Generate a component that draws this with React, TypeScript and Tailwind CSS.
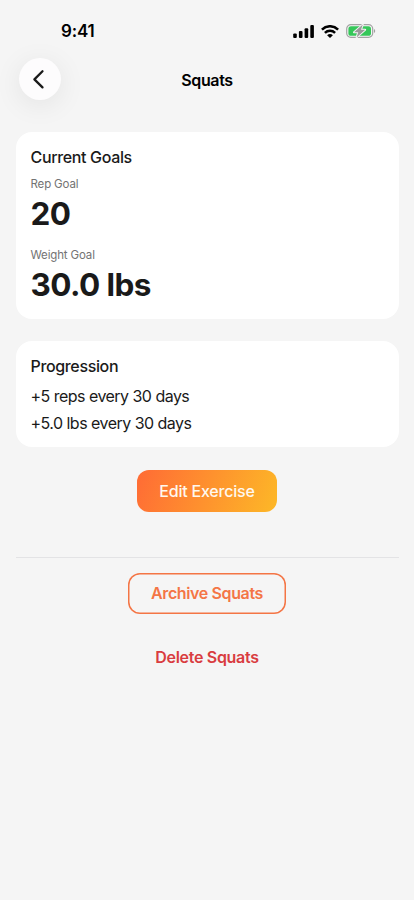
import React from 'react';

interface GoalProps {
  label: string;
  value: string;
}

const SignalIcon: React.FC = () => (
  <svg width="21" height="13" viewBox="0 0 21 13" fill="#000">
    <rect x="0.2" y="8.4" width="3.6" height="4.6" rx="1.1" />
    <rect x="5.9" y="6" width="3.6" height="7" rx="1.1" />
    <rect x="11.6" y="3.2" width="3.6" height="9.8" rx="1.1" />
    <rect x="17.3" y="0" width="3.6" height="13" rx="1.1" />
  </svg>
);

const WifiIcon: React.FC = () => (
  <svg width="18" height="13" viewBox="0 0 18 13" fill="none" stroke="#000" strokeWidth="2.5">
    <path d="M0.9 4.6 C5.5 0.1 12.5 0.1 17.1 4.6" />
    <path d="M3.9 7.8 C6.8 5 11.2 5 14.1 7.8" />
    <path d="M9 13 L6.1 10.2 C7.8 8.7 10.2 8.7 11.9 10.2 Z" fill="#000" stroke="none" />
  </svg>
);

const BatteryIcon: React.FC = () => (
  <svg width="30" height="16" viewBox="0 0 30 16">
    <rect x="0.7" y="1.6" width="26" height="12.8" rx="4.2" fill="none" stroke="#a3a3a3" strokeWidth="1.2" />
    <path d="M28 6 C29.6 6.6 29.6 9.4 28 10 Z" fill="#a0a0a0" />
    <rect x="2.4" y="3.2" width="22.6" height="9.6" rx="2.6" fill="#35c759" />
    <path
      d="M16.8 1.6 L8 9.3 H12.2 L10.6 14.4 L19.2 6.7 H15 Z"
      fill="#999"
      stroke="#f5f5f5"
      strokeWidth="1.9"
      strokeLinejoin="round"
      paintOrder="stroke"
    />
  </svg>
);

const StatusBar: React.FC = () => (
  <div className="flex h-[58px] items-start justify-between pt-[22px] pr-[38px] pl-[61px]">
    <span className="text-[17px] leading-[18px] font-semibold tracking-[-0.2px] text-black">9:41</span>
    <div className="flex items-center pt-px">
      <SignalIcon />
      <span className="ml-[7px]">
        <WifiIcon />
      </span>
      <span className="ml-[7px]">
        <BatteryIcon />
      </span>
    </div>
  </div>
);

const Goal: React.FC<GoalProps> = ({ label, value }) => (
  <div>
    <div className="text-[11.5px] leading-[16px] tracking-[-0.15px] text-[#737373]">{label}</div>
    <div className="mt-[2px] text-[31.5px] leading-[40px] font-bold tracking-[-0.6px] text-[#1a1a1a]">{value}</div>
  </div>
);

const App: React.FC = () => {
  return (
    <div className="min-h-[900px] w-[414px] overflow-hidden bg-[#f5f5f5] font-['Inter','Liberation_Sans',sans-serif] text-[#1a1a1a]">
      <StatusBar />

      <header className="grid h-[42px] grid-cols-[1fr_auto_1fr] items-center px-[19px]">
        <button className="flex size-[42px] items-center justify-center rounded-full bg-[#fdfcfd] shadow-[0_5px_28px_rgba(0,0,0,0.08)]">
          <svg width="22" height="22" viewBox="0 0 22 22" fill="none" stroke="#1a1a1a" strokeWidth="2.3" strokeLinecap="round" strokeLinejoin="round">
            <path d="M13.5 3.2 L5.4 11.4 L13.5 19.4" />
          </svg>
        </button>
        <h1 className="pt-px text-[16px] leading-[20px] font-semibold tracking-[-0.35px] text-black">Squats</h1>
      </header>

      <main className="flex flex-col items-center px-[15.5px] pt-8">
        <section className="h-[186.5px] w-full rounded-[16px] bg-white px-[15px] pt-[15px]">
          <h2 className="text-[16px] leading-[20px] font-medium tracking-[-0.35px]">Current Goals</h2>
          <div className="mt-[9px] flex flex-col gap-[13px]">
            <Goal label="Rep Goal" value="20" />
            <Goal label="Weight Goal" value="30.0 lbs" />
          </div>
        </section>

        <section className="mt-[22.5px] h-[106px] w-full rounded-[16px] bg-white px-[15px] pt-[15px]">
          <h2 className="text-[16px] leading-[20px] font-medium tracking-[-0.35px]">Progression</h2>
          <div className="mt-[7px] text-[16px] leading-[27px] tracking-[-0.53px]">
            <p>+5 reps every 30 days</p>
            <p>+5.0 lbs every 30 days</p>
          </div>
        </section>

        <button className="mt-[23px] h-[41.5px] w-[140px] rounded-[12px] bg-linear-[110deg] from-[#ff6b35] to-[#fdb827] text-[16px] font-medium tracking-[-0.2px] text-[#fff8ee]">
          Edit Exercise
        </button>

        <div className="mt-[45.5px] h-px w-full bg-[#e3e3e5]" />

        <button className="mt-[15px] h-[41px] w-[158px] rounded-[12px] pb-px text-[16px] font-semibold tracking-[-0.38px] text-[#f47545] shadow-[inset_0_0_0_1.5px_#f47545]">
          Archive Squats
        </button>
        <button className="mt-[33px] text-[16px] leading-[20px] font-semibold tracking-[-0.3px] text-[#d93c40]">
          Delete Squats
        </button>
      </main>
    </div>
  );
};

export default App;
